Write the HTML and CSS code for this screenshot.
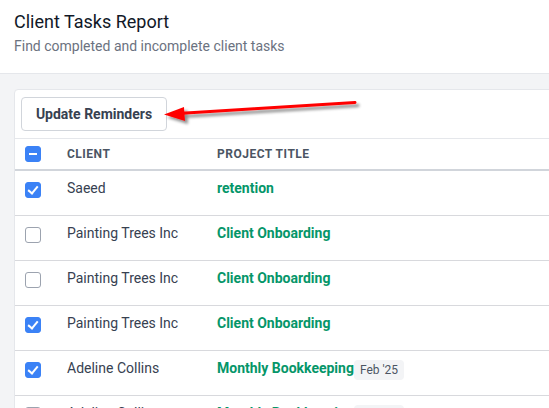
FILE: index.html
```html
<!DOCTYPE html>
<html lang="en">

<head>
    <meta charset="UTF-8">
    <meta name="viewport" content="width=device-width, initial-scale=1.0">
    <title>Client Tasks Report</title>
    <link rel="stylesheet" href="styles.css">
</head>

<body>
    <div class="page-header">
        <h1 class="page-title">Client Tasks Report</h1>
        <p class="page-subtitle">Find completed and incomplete client tasks</p>
    </div>
    <div class="page-body">
        <div class="card">
            <div class="toolbar">
                <button class="btn">Update Reminders</button>
            </div>
            <div class="task-table">
                <div class="task-row task-head">
                    <div class="cell-check"><span class="check check-mixed"></span></div>
                    <div>Client</div>
                    <div>Project Title</div>
                </div>
                <div class="task-row">
                    <div class="cell-check"><span class="check check-on"></span></div>
                    <div class="client">Saeed</div>
                    <div class="project">retention</div>
                </div>
                <div class="task-row">
                    <div class="cell-check"><span class="check"></span></div>
                    <div class="client">Painting Trees Inc</div>
                    <div class="project">Client Onboarding</div>
                </div>
                <div class="task-row">
                    <div class="cell-check"><span class="check"></span></div>
                    <div class="client">Painting Trees Inc</div>
                    <div class="project">Client Onboarding</div>
                </div>
                <div class="task-row">
                    <div class="cell-check"><span class="check check-on"></span></div>
                    <div class="client">Painting Trees Inc</div>
                    <div class="project">Client Onboarding</div>
                </div>
                <div class="task-row">
                    <div class="cell-check"><span class="check check-on"></span></div>
                    <div class="client">Adeline Collins</div>
                    <div class="project">Monthly Bookkeeping<span class="badge">Feb '25</span></div>
                </div>
                <div class="task-row">
                    <div class="cell-check"><span class="check"></span></div>
                    <div class="client">Adeline Collins</div>
                    <div class="project">Monthly Bookkeeping<span class="badge">Jan '25</span></div>
                </div>
            </div>
        </div>
        <!-- annotation arrow -->
        <svg class="arrow" width="549" height="408" viewBox="0 0 549 408">
            <defs>
                <filter id="shadow" x="-10%" y="-50%" width="120%" height="200%">
                    <feGaussianBlur in="SourceAlpha" stdDeviation="1.5" />
                    <feOffset dx="3" dy="3" result="blur" />
                    <feComponentTransfer>
                        <feFuncA type="linear" slope="0.45" />
                    </feComponentTransfer>
                    <feMerge>
                        <feMergeNode />
                        <feMergeNode in="SourceGraphic" />
                    </feMerge>
                </filter>
            </defs>
            <g filter="url(#shadow)">
                <line x1="355" y1="102.5" x2="178" y2="113.5" stroke="#ff0000" stroke-width="3" stroke-linecap="round" />
                <polygon points="164,114.5 184,107 185,121" fill="#ff0000" />
            </g>
        </svg>
    </div>
</body>

</html>
```

FILE: styles.css
```css
body {
    margin: 0;
    font-family: Roboto, "Liberation Sans", Arial, sans-serif;
    background: #f3f4f6;
    overflow: hidden;
    height: 408px;
}

.page-header {
    background: #ffffff;
    padding: 8px 14px 17px 14px;
    border-bottom: 1px solid #e5e7eb;
}

.page-title {
    margin: 0;
    font-size: 18px;
    line-height: 28px;
    font-weight: 400;
    color: #111827;
}

.page-subtitle {
    margin: 0;
    font-size: 14px;
    line-height: 20px;
    color: #6b7280;
}

.page-body {
    padding: 15px 0 0 14px;
}

.card {
    width: 600px;
    background: #ffffff;
    border: 1px solid #e5e7eb;
    border-radius: 4px 0 0 0;
}

.toolbar {
    padding: 7px 6px;
    border-bottom: 1px solid #e5e7eb;
}

.btn {
    display: block;
    height: 34px;
    width: 146px;
    padding: 0;
    background: #ffffff;
    border: 1px solid #d1d5db;
    border-radius: 4px;
    font-family: inherit;
    font-size: 14px;
    font-weight: 700;
    color: #374151;
}

.task-row {
    display: grid;
    grid-template-columns: 52px 150px 1fr;
    padding: 7px 0 17px 0;
    border-bottom: 1px solid #d8d9dd;
    font-size: 14px;
    line-height: 20px;
}

.task-head {
    padding: 4px 0 4px 0;
    border-bottom: 2px solid #d1d5db;
    font-size: 12px;
    font-weight: 700;
    letter-spacing: 0.5px;
    text-transform: uppercase;
    color: #4b5563;
    line-height: 22px;
}

.cell-check {
    padding-left: 10px;
}

.check {
    display: block;
    box-sizing: border-box;
    width: 16px;
    height: 16px;
    margin-top: 3px;
    border: 1.5px solid #9ca3af;
    border-radius: 3px;
    background: #ffffff;
    position: relative;
}

.task-row .check {
    margin-top: 4px;
}

.task-head .check {
    margin-top: 3px;
}

.check-on,
.check-mixed {
    border-color: #3b82f6;
    background: #3b82f6;
}

.check-on::after {
    content: "";
    position: absolute;
    left: 4px;
    top: 1px;
    width: 4px;
    height: 8px;
    border: solid #ffffff;
    border-width: 0 2px 2px 0;
    transform: rotate(40deg);
}

.check-mixed::after {
    content: "";
    position: absolute;
    left: 2.5px;
    top: 5.5px;
    width: 8px;
    height: 2px;
    background: #ffffff;
}

.client {
    color: #374151;
}

.project {
    color: #059669;
    font-weight: 700;
}

.badge {
    display: inline-block;
    padding: 0 6px;
    height: 20px;
    line-height: 20px;
    vertical-align: top;
    position: relative;
    top: 2px;
    border-radius: 4px;
    background: #f3f4f6;
    color: #4b5563;
    font-size: 12px;
    font-weight: 400;
}

.arrow {
    position: absolute;
    left: 0;
    top: 0;
    pointer-events: none;
}
```
